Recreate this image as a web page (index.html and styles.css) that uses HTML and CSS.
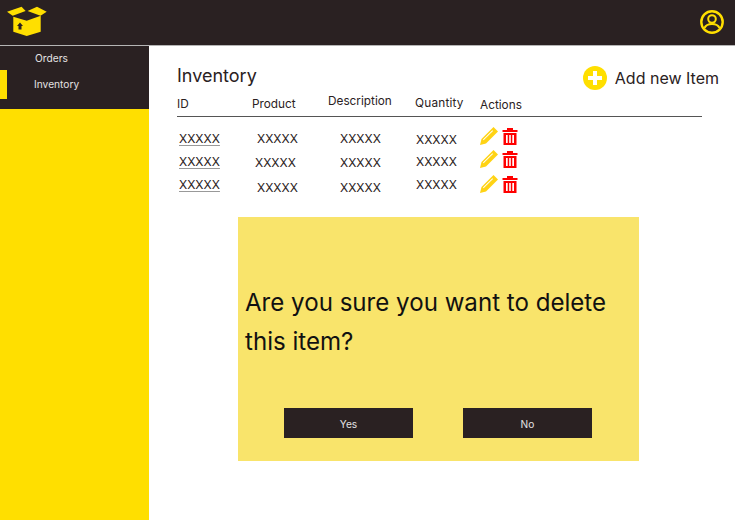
FILE: index.html
```html
<!DOCTYPE html>
<html lang="en">
<head>
    <meta charset="UTF-8">
    <meta name="viewport" content="width=device-width, initial-scale=1.0">
    <title>Inventory</title>
    <link rel="stylesheet" href="styles.css">
</head>
<body>
    <header class="topbar">
        <svg class="logo" width="48" height="38" viewBox="0 0 48 38">
            <path fill="#ffdf00" d="M7 11.7 21.6 6.7 25.6 11 12.7 15.7Z"/>
            <path fill="#ffdf00" d="M27.6 11 37 6.7 46.7 11.7 40.5 15.7Z"/>
            <path fill="#ffdf00" d="M13.3 16.7 26.7 20.7 40.7 15.7V31.7L26.7 36 13.3 31.7Z"/>
            <path fill="#2a2122" d="M20 22.5 23 26H21.500V29.500H18.500V26H17Z"/>
        </svg>
        <svg class="user-icon" width="26" height="26" viewBox="0 0 26 26">
            <circle cx="13" cy="13" r="10.700" fill="none" stroke="#ffdf00" stroke-width="2.400"/>
            <circle cx="13" cy="10" r="3.800" fill="none" stroke="#ffdf00" stroke-width="2"/>
            <path fill="none" stroke="#ffdf00" stroke-width="2" d="M5.500 19C7 15.500 10 15 13 15S19 15.500 20.500 19"/>
        </svg>
    </header>
    <div class="layout">
        <aside class="sidebar">
            <nav class="menu">
                <a class="menu-item">Orders</a>
                <a class="menu-item active">Inventory</a>
            </nav>
        </aside>
        <main class="content">
            <div class="title-row">
                <h1>Inventory</h1>
                <a class="add-item">
                    <svg width="24" height="24" viewBox="0 0 24 24">
                        <circle cx="12" cy="12" r="12" fill="#ffdf00"/>
                        <path fill="none" stroke="#fff" stroke-width="4" d="M12 5V19M5 12H19"/>
                    </svg>
                    Add new Item
                </a>
            </div>
            <div class="table-head">
                <span>ID</span>
                <span>Product</span>
                <span class="up">Description</span>
                <span class="up-small">Quantity</span>
                <span class="down">Actions</span>
            </div>
            <div class="row">
                <span class="id">XXXXX</span><span>XXXXX</span><span>XXXXX</span><span class="low">XXXXX</span>
                <span class="actions">
                    <svg width="18" height="18" viewBox="0 0 18 18"><path fill="#ffd314" d="M13.500 0 18 4.500 6 16.500 0 18 1.500 12Z"/><path fill="#fff" d="M3 12.600 12.400 3.300 13 3.900 3.600 13.200Z"/></svg>
                    <svg width="16" height="18" viewBox="0 0 16 18"><path fill="#f00" d="M0.500 3H5V1H11V3H15.500V5H0.500ZM1.500 6H14.500V18H1.500ZM4 8V16H5.700V8ZM7.200 8V16H8.800V8ZM10.300 8V16H12V8Z"/></svg>
                </span>
            </div>
            <div class="row">
                <span class="id">XXXXX</span><span class="back low">XXXXX</span><span class="low">XXXXX</span><span>XXXXX</span>
                <span class="actions">
                    <svg width="18" height="18" viewBox="0 0 18 18"><path fill="#ffd314" d="M13.500 0 18 4.500 6 16.500 0 18 1.500 12Z"/><path fill="#fff" d="M3 12.600 12.400 3.300 13 3.900 3.600 13.200Z"/></svg>
                    <svg width="16" height="18" viewBox="0 0 16 18"><path fill="#f00" d="M0.500 3H5V1H11V3H15.500V5H0.500ZM1.500 6H14.500V18H1.500ZM4 8V16H5.700V8ZM7.200 8V16H8.800V8ZM10.300 8V16H12V8Z"/></svg>
                </span>
            </div>
            <div class="row">
                <span class="id">XXXXX</span><span class="lower">XXXXX</span><span class="lower">XXXXX</span><span>XXXXX</span>
                <span class="actions actions-low">
                    <svg width="18" height="18" viewBox="0 0 18 18"><path fill="#ffd314" d="M13.500 0 18 4.500 6 16.500 0 18 1.500 12Z"/><path fill="#fff" d="M3 12.600 12.400 3.300 13 3.900 3.600 13.200Z"/></svg>
                    <svg width="16" height="18" viewBox="0 0 16 18"><path fill="#f00" d="M0.500 3H5V1H11V3H15.500V5H0.500ZM1.500 6H14.500V18H1.500ZM4 8V16H5.700V8ZM7.200 8V16H8.800V8ZM10.300 8V16H12V8Z"/></svg>
                </span>
            </div>
        </main>
    </div>

    <div class="modal">
        <p class="modal-text">Are you sure you want to delete this item?</p>
        <div class="modal-buttons">
            <button class="modal-button">Yes</button>
            <button class="modal-button">No</button>
        </div>
    </div>
</body>
</html>
```

FILE: styles.css
```css
body {
    margin: 0;
    width: 735px;
    height: 520px;
    overflow: hidden;
    font-family: Inter, "Liberation Sans", sans-serif;
    background-color: #fff;
    color: #2a2122;
}
.topbar {
    height: 46px;
    box-sizing: border-box;
    background-color: #2a2122;
    display: flex;
    justify-content: space-between;
    align-items: flex-start;
    border-bottom: 1px solid #b5b5b5;
}
.logo {
    display: block;
}
.user-icon {
    margin: 9px 10px 0 0;
}
.layout {
    display: flex;
    height: 474px;
}
.sidebar {
    width: 149px;
    flex-shrink: 0;
    background-color: #ffdf00;
}
.menu {
    height: 63px;
    background-color: #2a2122;
}
.menu-item {
    display: block;
    height: 24px;
    line-height: 24px;
    font-size: 10.200px;
    color: #e4e2e2;
    padding-left: 35px;
}
.menu-item.active {
    box-sizing: border-box;
    height: 29px;
    padding-left: 27px;
    line-height: 29px;
    border-left: 7px solid #ffdf00;
}
.content {
    flex: 1;
    padding: 0 33px 0 28px;
}
.title-row {
    display: flex;
    justify-content: space-between;
    align-items: flex-start;
    height: 45px;
    padding-top: 19px;
    box-sizing: border-box;
}
h1 {
    margin: 0;
    font-size: 18px;
    font-weight: 400;
    line-height: 22px;
    color: #2a2122;
}
.add-item {
    display: flex;
    align-items: center;
    gap: 8px;
    margin: 1px -17px 0 0;
    font-size: 16px;
    color: #2a2122;
}
.table-head {
    display: grid;
    grid-template-columns: 75px 76px 87px 65px 1fr;
    height: 26px;
    box-sizing: border-box;
    width: 525px;
    border-bottom: 1px solid #555;
    font-size: 11.800px;
    line-height: 26px;
}
.up {
    margin-top: -3px;
}
.up-small {
    margin-top: -1px;
    letter-spacing: 0.200px;
}
.down {
    margin-top: 1px;
}
.row {
    display: grid;
    grid-template-columns: 78px 83px 76px 64px 1fr;
    height: 23.500px;
    margin-left: 2px;
    font-size: 12px;
    line-height: 20px;
    color: #2a2122;
}
.table-head + .row {
    margin-top: 12px;
    height: 22.500px;
}
.id {
    text-decoration: underline;
    text-decoration-color: #999;
    text-underline-offset: 2px;
}
.low {
    margin-top: 1px;
}
.lower {
    margin-top: 3px;
}
.back {
    margin-left: -2px;
}
.actions {
    display: flex;
    gap: 4px;
    margin-top: -2px;
}
.actions-low {
    margin-top: 0;
}
.modal {
    position: absolute;
    left: 238px;
    top: 217px;
    width: 401px;
    height: 244px;
    box-sizing: border-box;
    background-color: #f9e46b;
    padding: 66px 7px 0;
}
.modal-text {
    margin: 0;
    font-size: 24.100px;
    line-height: 39px;
    color: #111;
}
.modal-buttons {
    display: flex;
    gap: 50px;
    margin: 47px 0 0 39px;
}
.modal-button {
    width: 129px;
    height: 30px;
    padding: 2px 0 0;
    border: none;
    background-color: #2a2122;
    color: #e4e2e2;
    font-family: Inter, "Liberation Sans", sans-serif;
    font-size: 10.200px;
}
```
